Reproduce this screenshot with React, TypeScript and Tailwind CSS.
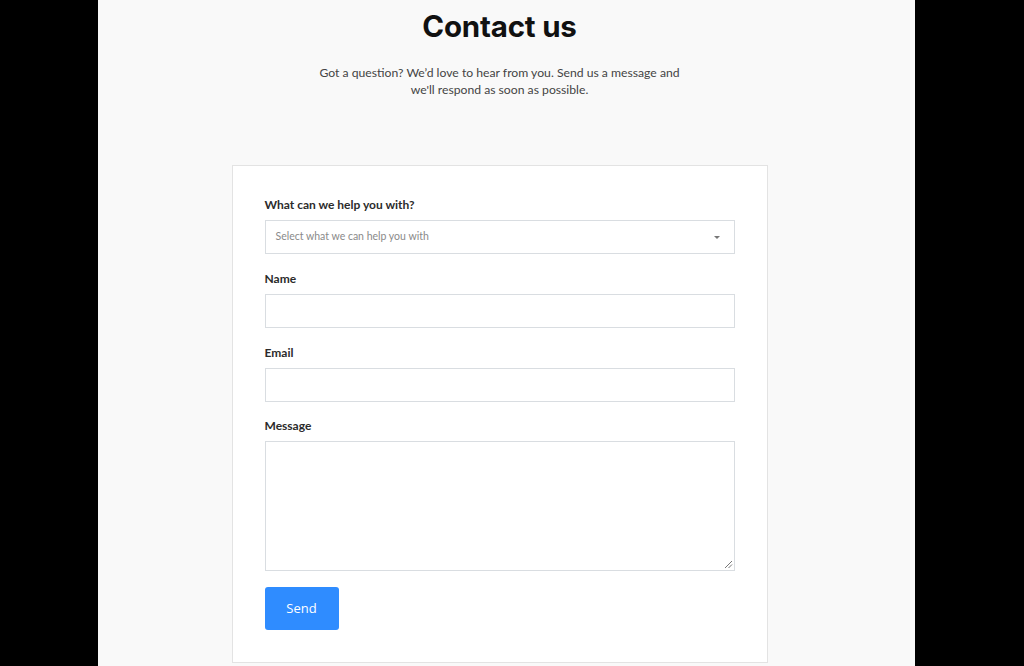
import React from "react";

export default function App() {
  const labelCls = "block text-[12px] font-bold text-[#2b2b2b] leading-[14px] mb-[8px]";
  const inputCls = "block w-full h-[34px] border border-[#d9dde1] bg-white";
  return (
    <div className="w-[1024px] h-[666px] bg-black flex overflow-hidden" style={{ fontFamily: "Lato, 'Open Sans', sans-serif" }}>
      <div className="ml-[98px] w-[817px] h-full bg-[#f9f9f9] pr-[14px]">
        <div className="flex flex-col items-center h-full">
          <h1 className="mt-[7px] text-[29.5px] leading-[38px] font-bold text-[#111] tracking-[-0.2px]" style={{ fontFamily: "Inter, sans-serif" }}>Contact us</h1>
          <p className="mt-[19px] text-[12.2px] leading-[17px] text-[#444] text-center w-[400px]">
            Got a question? We’d love to hear from you. Send us a message and<br />we'll respond as soon as possible.
          </p>
          <div className="mt-[67px] w-[536px] h-[498px] bg-white border border-[#e3e3e3] pt-[32px] px-[32px]">
            <label className={labelCls}>What can we help you with?</label>
            <div className={`${inputCls} flex items-center justify-between px-[10px]`}>
              <span className="text-[10.5px] text-[#8a8a8a]">Select what we can help you with</span>
              <svg width="6" height="3" viewBox="0 0 6 3" className="mr-[4px]"><path d="M0 0h6L3 3z" fill="#777" /></svg>
            </div>
            <label className={`${labelCls} mt-[18px]`}>Name</label>
            <div className={inputCls} />
            <label className={`${labelCls} mt-[18px]`}>Email</label>
            <div className={inputCls} />
            <label className={`${labelCls} mt-[17px]`}>Message</label>
            <div className="relative w-full h-[130px] border border-[#d9dde1] bg-white">
              <svg width="9" height="9" viewBox="0 0 9 9" className="absolute right-[1px] bottom-[1px]">
                <path d="M1 8L8 1M4.5 8L8 4.5" stroke="#777" strokeWidth="1" />
              </svg>
            </div>
            <button className="mt-[16px] w-[74px] h-[43px] rounded-[3px] bg-[#2f8cff] text-white text-[13px]" style={{ fontFamily: "'Open Sans', sans-serif" }}>Send</button>
          </div>
        </div>
      </div>
    </div>
  );
}
